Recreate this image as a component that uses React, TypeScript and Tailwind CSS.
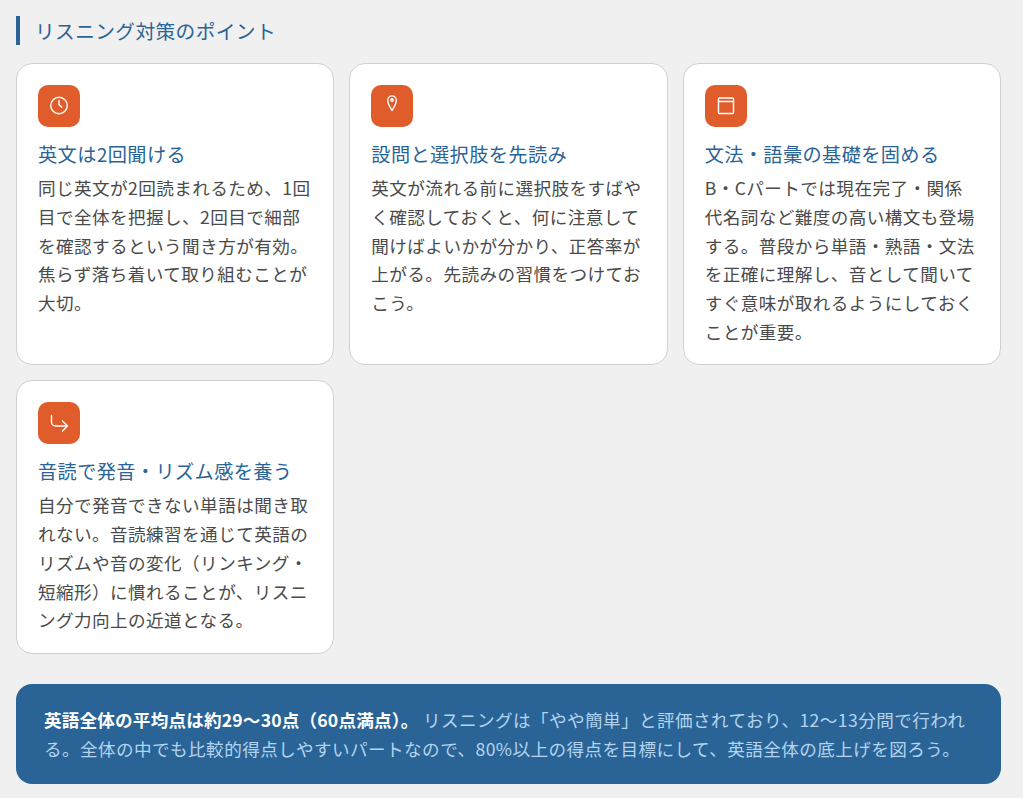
const points = [
  {
    title: "英文は2回聞ける",
    body: "同じ英文が2回読まれるため、1回目で全体を把握し、2回目で細部を確認するという聞き方が有効。焦らず落ち着いて取り組むことが大切。",
    icon: (
      <>
        <circle cx="21" cy="20.500" r="8.300" />
        <path d="M21 15.500v4l2.800 2.800" />
      </>
    ),
  },
  {
    title: "設問と選択肢を先読み",
    body: "英文が流れる前に選択肢をすばやく確認しておくと、何に注意して聞けばよいかが分かり、正答率が上がる。先読みの習慣をつけておこう。",
    icon: (
      <>
        <path d="M21 25.500c-1.500-3-4.300-6-4.300-10.300a4.300 4.300 0 0 1 8.600 0c0 4.300-2.800 7.300-4.300 10.300z" />
        <circle cx="21" cy="15" r="1.200" />
      </>
    ),
  },
  {
    title: "文法・語彙の基礎を固める",
    body: "B・Cパートでは現在完了・関係代名詞など難度の高い構文も登場する。普段から単語・熟語・文法を正確に理解し、音として聞いてすぐ意味が取れるようにしておくことが重要。",
    icon: (
      <>
        <rect x="13.500" y="13" width="15" height="15.500" rx="1" />
        <path d="M13.500 16.500h15" />
      </>
    ),
  },
  {
    title: "音読で発音・リズム感を養う",
    body: "自分で発音できない単語は聞き取れない。音読練習を通じて英語のリズムや音の変化（リンキング・短縮形）に慣れることが、リスニング力向上の近道となる。",
    icon: <path d="M13.500 13.500v6.500a4 4 0 0 0 4 4h12M24.500 19l5 5-5 5" />,
  },
];

export default function App() {
  return (
    <div
      className="min-h-[798px] bg-[#f0f0f0] pl-4 pt-4 w-[1001px] box-content pr-[22px] overflow-hidden"
      style={{ fontFamily: '"Noto Sans CJK JP", sans-serif' }}
    >
      <h2 className="border-l-4 border-[#2a6496] pl-[15px] text-[19.700px] tracking-[0.02em] leading-[29px] font-normal text-[#2a6496]">
        リスニング対策のポイント
      </h2>
      <div className="mt-[18px] grid w-[985px] grid-cols-3 gap-[15px]">
        {points.map((p) => (
          <div key={p.title} className="rounded-2xl border border-[#d0d0d0] bg-white pl-[21px] pr-[21.500px] pb-[17.500px] pt-[21px]">
            <div className="h-[42px] w-[42px] rounded-[10px] bg-[#e05d2b]">
              <svg
                viewBox="0 0 42 42"
                className="h-[42px] w-[42px]"
                fill="none"
                stroke="white"
                strokeWidth="1.400"
                strokeLinecap="round"
                strokeLinejoin="round"
              >
                {p.icon}
              </svg>
            </div>
            <h3 className="mt-[13px] text-[19.200px] tracking-[0.02em] font-normal leading-[28px] text-[#2a6496]">{p.title}</h3>
            <p className="mt-[6px] text-[17.600px] tracking-[0.42px] leading-[28.800px] text-[#4a4a4a]">{p.body}</p>
          </div>
        ))}
      </div>
      <div className="mt-[30px] w-[985px] rounded-2xl bg-[#2a6496] px-7 py-[21px] text-[17.600px] tracking-[0.42px] leading-[29px] text-[#b3d4f0]">
        <strong className="font-bold tracking-[0.18px] text-white">英語全体の平均点は約29〜30点（60点満点）。</strong>{" "}
        リスニングは「やや簡単」と評価されており、12〜13分間で行われる。全体の中でも比較的得点しやすいパートなので、80%以上の得点を目標にして、英語全体の底上げを図ろう。
      </div>
    </div>
  );
}
